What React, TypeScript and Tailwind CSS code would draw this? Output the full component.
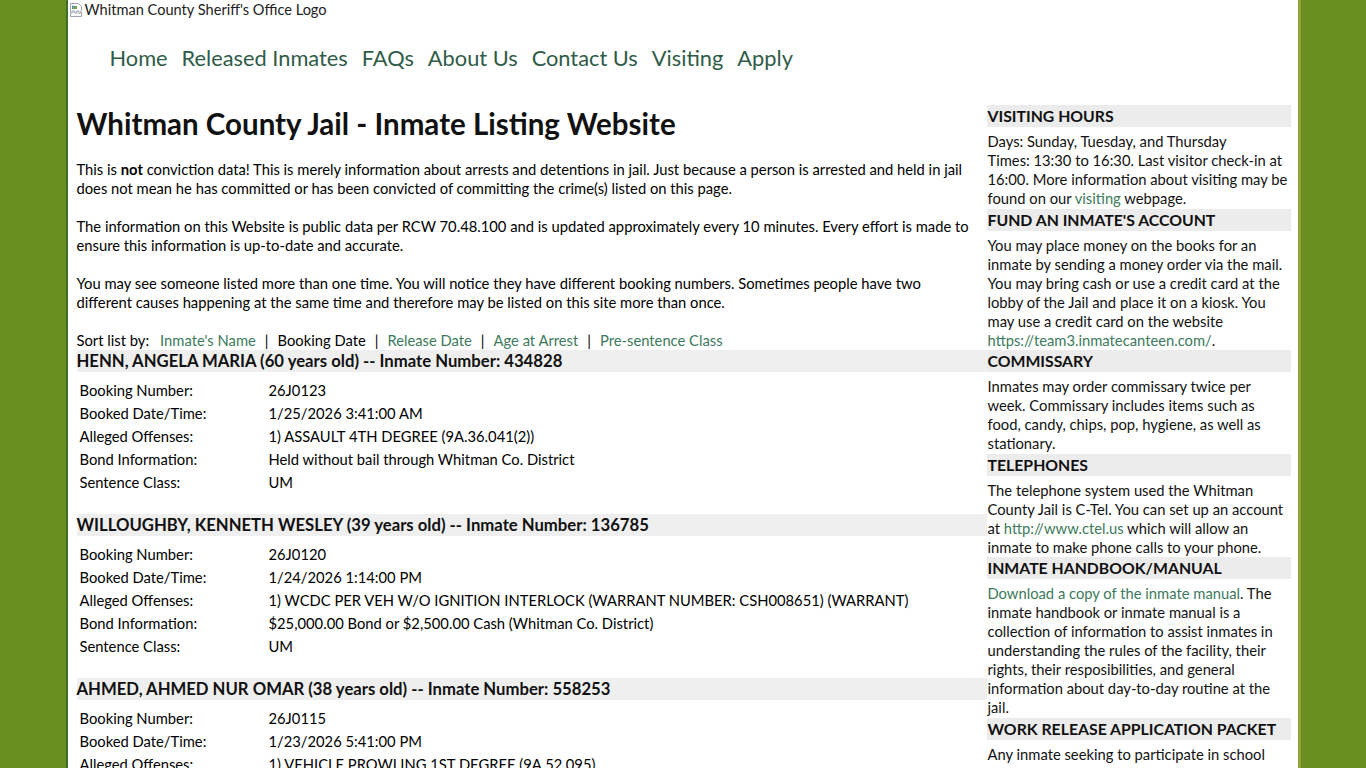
import React from "react";

interface Inmate {
  name: string;
  rows: [string, string][];
}

const inmates: Inmate[] = [
  {
    name: "HENN, ANGELA MARIA (60 years old) -- Inmate Number: 434828",
    rows: [
      ["Booking Number:", "26J0123"],
      ["Booked Date/Time:", "1/25/2026 3:41:00 AM"],
      ["Alleged Offenses:", "1) ASSAULT 4TH DEGREE (9A.36.041(2))"],
      ["Bond Information:", "Held without bail through Whitman Co. District"],
      ["Sentence Class:", "UM"],
    ],
  },
  {
    name: "WILLOUGHBY, KENNETH WESLEY (39 years old) -- Inmate Number: 136785",
    rows: [
      ["Booking Number:", "26J0120"],
      ["Booked Date/Time:", "1/24/2026 1:14:00 PM"],
      ["Alleged Offenses:", "1) WCDC PER VEH W/O IGNITION INTERLOCK (WARRANT NUMBER: CSH008651) (WARRANT)"],
      ["Bond Information:", "$25,000.00 Bond or $2,500.00 Cash (Whitman Co. District)"],
      ["Sentence Class:", "UM"],
    ],
  },
  {
    name: "AHMED, AHMED NUR OMAR (38 years old) -- Inmate Number: 558253",
    rows: [
      ["Booking Number:", "26J0115"],
      ["Booked Date/Time:", "1/23/2026 5:41:00 PM"],
      ["Alleged Offenses:", "1) VEHICLE PROWLING 1ST DEGREE (9A.52.095)"],
      ["Bond Information:", "$10,000.00 Bond or $1,000.00 Cash (Whitman Co. District)"],
      ["Sentence Class:", "UM"],
    ],
  },
];

const navLinks = ["Home", "Released Inmates", "FAQs", "About Us", "Contact Us", "Visiting", "Apply"];

const sortLinks: [string, boolean][] = [
  ["Inmate's Name", true],
  ["Booking Date", false],
  ["Release Date", true],
  ["Age at Arrest", true],
  ["Pre-sentence Class", true],
];

const BrokenImage = () => (
  <svg width="16" height="16" viewBox="0 0 16 16" className="shrink-0">
    <path d="M2.5 1.5h8l3 3v4l-2 1.5-2-1.5-2 1.5-2-1.5-3 2z" fill="#fff" stroke="#9aa4b0" />
    <path d="M2.5 12l3-2 2 1.5 2-1.5 2 1.5 2-1.5v4.5h-11z" fill="#fff" stroke="#9aa4b0" />
    <rect x="4" y="4" width="5" height="3" fill="#6fa35a" />
    <circle cx="5" cy="4.5" r="1" fill="#4a90d9" />
  </svg>
);

const SideHead = ({ children }: { children: React.ReactNode }) => (
  <div className="bg-[#ececec] h-[22px] leading-[22px] pl-px font-bold text-[15.8px] text-[#111] whitespace-nowrap">
    {children}
  </div>
);

const SideBody = ({ children, last = false }: { children: React.ReactNode; last?: boolean }) => (
  <div className={last ? "pt-[5px] pb-px pl-px whitespace-nowrap" : "pt-[5px] pl-px whitespace-nowrap"}>{children}</div>
);

const link = "text-[#3c7a5c]";

export default function App() {
  return (
    <div
      className="min-h-screen bg-[#6b8e23] text-black"
      style={{ fontFamily: "Lato, 'Open Sans', sans-serif" }}
    >
      <div className="mx-auto w-[1235px] min-h-screen bg-white border-l-2 border-l-[#3f6e25] border-r-[3px] border-r-[#95a23a]">
        {/* logo */}
        <div className="flex items-center h-[20px] text-[14.6px] text-[#222]">
          <BrokenImage />
          <span className="ml-px">Whitman County Sheriff's Office Logo</span>
        </div>

        {/* nav */}
        <div className="flex gap-[14px] pl-[42px] mt-[24px] text-[21.8px] leading-[28px] text-[#2f5c48]">
          {navLinks.map((n) => (
            <span key={n}>{n}</span>
          ))}
        </div>

        <div className="flex mt-[33px]">
          {/* main */}
          <div className="w-[917px] pl-[9px] pt-px text-[14.75px] leading-[19px]">
            <h1 className="text-[29.5px] leading-[36px] font-bold text-[#111]">
              Whitman County Jail - Inmate Listing Website
            </h1>
            <p className="mt-[18px]">
              This is <b>not</b> conviction data! This is merely information about arrests and detentions in jail. Just because a person is arrested and held in jail
              <br />
              does not mean he has committed or has been convicted of committing the crime(s) listed on this page.
            </p>
            <p className="mt-[19px]">
              The information on this Website is public data per RCW 70.48.100 and is updated approximately every 10 minutes. Every effort is made to
              <br />
              ensure this information is up-to-date and accurate.
            </p>
            <p className="mt-[19px]">
              You may see someone listed more than one time. You will notice they have different booking numbers. Sometimes people have two
              <br />
              different causes happening at the same time and therefore may be listed on this site more than once.
            </p>
            <div className="mt-[19px] flex whitespace-nowrap">
              <span className="mr-[11px]">Sort list by:</span>
              {sortLinks.map(([s, isLink], i) => (
                <React.Fragment key={s}>
                  {i > 0 && <span className="mx-[9px]">|</span>}
                  <span className={isLink ? link : ""}>{s}</span>
                </React.Fragment>
              ))}
            </div>

            {inmates.map((m) => (
              <div key={m.name} className="mb-[20px]">
                <div className="bg-[#efefef] h-[22px] leading-[22px] font-bold text-[16.7px] text-[#111] -mr-[2px] whitespace-nowrap">
                  {m.name}
                </div>
                <table className="mt-[7px]">
                  <tbody>
                    {m.rows.map(([k, v]) => (
                      <tr key={k} className="h-[23px]">
                        <td className="w-[192px] pl-[3px] align-middle">{k}</td>
                        <td className="align-middle">{v}</td>
                      </tr>
                    ))}
                  </tbody>
                </table>
              </div>
            ))}
          </div>

          {/* sidebar */}
          <div className="w-[304px] ml-[2px] text-[14.75px] leading-[19px] text-[#111]">
            <SideHead>VISITING HOURS</SideHead>
            <SideBody last>
              Days: Sunday, Tuesday, and Thursday<br />
              Times: 13:30 to 16:30. Last visitor check-in at<br />
              16:00. More information about visiting may be<br />
              found on our <span className={link}>visiting</span> webpage.
            </SideBody>
            <SideHead>FUND AN INMATE'S ACCOUNT</SideHead>
            <SideBody>
              You may place money on the books for an<br />
              inmate by sending a money order via the mail.<br />
              You may bring cash or use a credit card at the<br />
              lobby of the Jail and place it on a kiosk. You<br />
              may use a credit card on the website<br />
              <span className={link}>https://team3.inmatecanteen.com/</span>.
            </SideBody>
            <SideHead>COMMISSARY</SideHead>
            <SideBody last>
              Inmates may order commissary twice per<br />
              week. Commissary includes items such as<br />
              food, candy, chips, pop, hygiene, as well as<br />
              stationary.
            </SideBody>
            <SideHead>TELEPHONES</SideHead>
            <SideBody>
              The telephone system used the Whitman<br />
              County Jail is C-Tel. You can set up an account<br />
              at <span className={link}>http://www.ctel.us</span> which will allow an<br />
              inmate to make phone calls to your phone.
            </SideBody>
            <SideHead>INMATE HANDBOOK/MANUAL</SideHead>
            <SideBody last>
              <span className={link}>Download a copy of the inmate manual</span>. The<br />
              inmate handbook or inmate manual is a<br />
              collection of information to assist inmates in<br />
              understanding the rules of the facility, their<br />
              rights, their resposibilities, and general<br />
              information about day-to-day routine at the<br />
              jail.
            </SideBody>
            <SideHead>WORK RELEASE APPLICATION PACKET</SideHead>
            <SideBody>
              Any inmate seeking to participate in school<br />
              or work release must complete an<br />
              application packet.
            </SideBody>
          </div>
        </div>
      </div>
    </div>
  );
}
